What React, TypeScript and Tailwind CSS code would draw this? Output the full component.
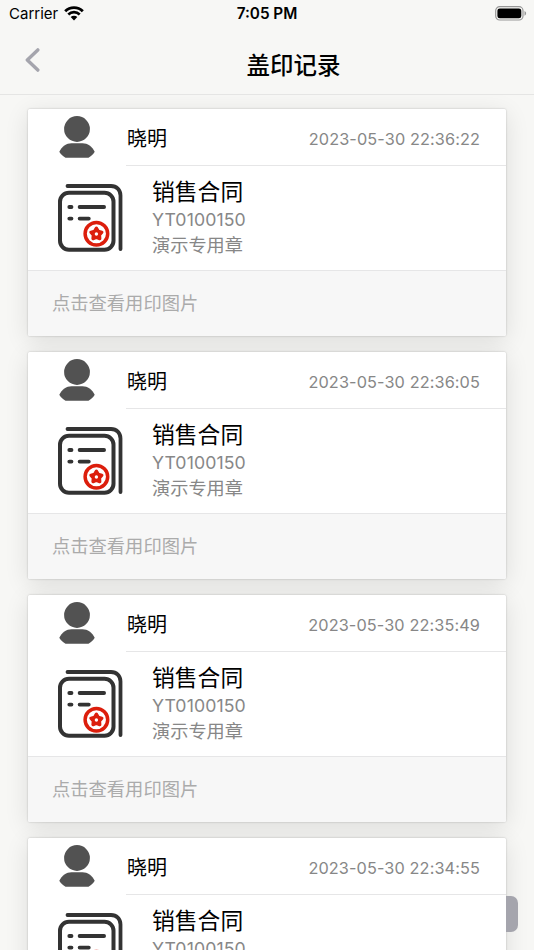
interface StampRecord {
  name: string
  time: string
  title: string
  code: string
  seal: string
}

const records: StampRecord[] = [
  { name: "晓明", time: "2023-05-30 22:36:22", title: "销售合同", code: "YT0100150", seal: "演示专用章" },
  { name: "晓明", time: "2023-05-30 22:36:05", title: "销售合同", code: "YT0100150", seal: "演示专用章" },
  { name: "晓明", time: "2023-05-30 22:35:49", title: "销售合同", code: "YT0100150", seal: "演示专用章" },
  { name: "晓明", time: "2023-05-30 22:34:55", title: "销售合同", code: "YT0100150", seal: "演示专用章" },
]

function WifiIcon() {
  return (
    <svg width="20" height="15" viewBox="0 0 20 15" fill="none" stroke="#000">
      <path d="M1.2 5.2a12.6 12.6 0 0 1 17.6 0" strokeWidth="2.9" />
      <path d="M4.3 8.5a8.1 8.1 0 0 1 11.4 0" strokeWidth="2.6" />
      <path d="M10 14.4 6.7 11.1a4.7 4.7 0 0 1 6.6 0Z" fill="#000" stroke="none" />
    </svg>
  )
}

function BatteryIcon() {
  return (
    <svg width="32" height="15" viewBox="0 0 32 15" fill="none">
      <rect x="0.7" y="0.7" width="27.3" height="13.3" rx="4" stroke="#979797" strokeWidth="1.2" />
      <rect x="2.4" y="2.4" width="23.9" height="9.9" rx="2.4" fill="#000" />
      <path d="M29.5 5v4.7c1-.4 1.6-1.3 1.6-2.35S30.5 5.4 29.5 5Z" fill="#979797" />
    </svg>
  )
}

function UserIcon() {
  return (
    <svg width="36" height="42" viewBox="0 0 36 42" fill="#525252">
      <circle cx="18" cy="13" r="12.9" />
      <path d="M.3 35.8C2.7 30.5 7.5 27.2 12.5 27.2h11C28.5 27.2 33.3 30.5 35.7 35.8C34 38.6 32 40.4 29.5 41.8h-23C4 40.4 2 38.6.3 35.8Z" />
    </svg>
  )
}

function ContractIcon() {
  return (
    <svg width="66" height="70" viewBox="0 0 66 70" fill="none" stroke="#333" strokeWidth="4" strokeLinecap="round">
      <path d="M10.5 3H54c5.5 0 9.5 4 9.5 9.5V66" strokeWidth="3.8" />
      <rect x="3" y="9.7" width="53.5" height="57" rx="9" />
      <path d="M12.3 24h2.2M22.6 24h24.5M12.3 35.6h2.2M22.6 35.6h9.2" strokeWidth="3.8" />
      <circle cx="39.4" cy="50.8" r="11.3" fill="#fff" stroke="#dc1e0c" strokeWidth="3.5" />
      <path
        d="M39.4 45.1l1.9 3.2 3.6.9-2.4 2.8.3 3.7-3.4-1.5-3.4 1.5.3-3.7-2.4-2.8 3.6-.9Z"
        fill="#dc1e0c"
        stroke="#dc1e0c"
        strokeWidth="3.2"
        strokeLinejoin="round"
      />
      <circle cx="39.4" cy="51" r="1.7" fill="#fff" stroke="none" />
    </svg>
  )
}

function RecordCard({ record }: { record: StampRecord }) {
  return (
    <div className="rounded-[2px] shadow-[0_0_2px_rgba(0,0,0,0.25),0_5px_24px_rgba(0,0,0,0.11)]">
      <div className="relative z-10 h-[227px] overflow-hidden rounded-[2px] bg-white">
        <div className="flex h-14 pl-[31px]">
          <div className="w-[67px] pt-[7px]">
            <UserIcon />
          </div>
          <div className="flex flex-1 items-center justify-between pr-[26px] pl-px">
            <span className="pt-[3px] text-[20px] text-black">{record.name}</span>
            <span className="pt-[5px] text-[16.3px] tracking-[0.1px] text-[#878787]">{record.time}</span>
          </div>
        </div>
        <div className="ml-[98px] h-px bg-[#e6e6e7]" />
        <div className="flex h-[105px] border-b border-[#e6e6e7] pl-[29px]">
          <div className="w-[95px] pt-[17px]">
            <ContractIcon />
          </div>
          <div className="pt-[10px]">
            <h2 className="text-[22.8px] leading-[31px] text-black">{record.title}</h2>
            <p className="text-[17.7px] leading-[26px] tracking-[0.1px] text-[#878787]">{record.code}</p>
            <p className="text-[18.2px] leading-[25px] text-[#878787]">{record.seal}</p>
          </div>
        </div>
        <div className="flex h-[65px] items-center bg-[#f7f7f7] pt-px pl-6 text-[18.3px] text-[#ababab]">
          点击查看用印图片
        </div>
      </div>
    </div>
  )
}

export default function App() {
  return (
    <div className="relative h-[950px] w-[534px] overflow-hidden bg-[#f7f7f5] font-['Inter','Noto_Sans_CJK_SC',sans-serif]">
      <header className="relative z-20 h-[95px] border-b border-[#e5e5e4] bg-[#f7f7f5]">
        <div className="grid h-7 grid-cols-3 items-center pr-[7px] pl-[9px] text-[15px] text-black">
          <div className="flex items-center gap-[6px]">
            <span className="pt-px">Carrier</span>
            <span className="-mt-0.5">
              <WifiIcon />
            </span>
          </div>
          <span className="pt-px pr-0.5 text-center text-[15.3px] font-semibold">7:05 PM</span>
          <div className="-mt-0.5 flex justify-end">
            <BatteryIcon />
          </div>
        </div>
        <div className="grid h-[66px] grid-cols-[80px_1fr_52px] pl-[25px]">
          <button className="flex items-start pt-5" aria-label="返回">
            <svg width="15" height="24" viewBox="0 0 15 24" fill="none" stroke="#a5a5ad" strokeWidth="3.4" strokeLinecap="round" strokeLinejoin="round">
              <path d="M12.8 1.9 2.3 12l10.5 10.1" />
            </svg>
          </button>
          <h1 className="pt-5 text-center text-[23.5px] leading-9 font-medium text-black">盖印记录</h1>
        </div>
      </header>

      <main className="flex flex-col gap-4 px-7 pt-[14px]">
        {records.map((record) => (
          <RecordCard key={record.time} record={record} />
        ))}
      </main>

      {/* floating handle, tucked behind the cards */}
      <div className="absolute top-[896px] right-4 h-9 w-9 rounded-[7px] bg-[#a5a5ad]" />
    </div>
  )
}
